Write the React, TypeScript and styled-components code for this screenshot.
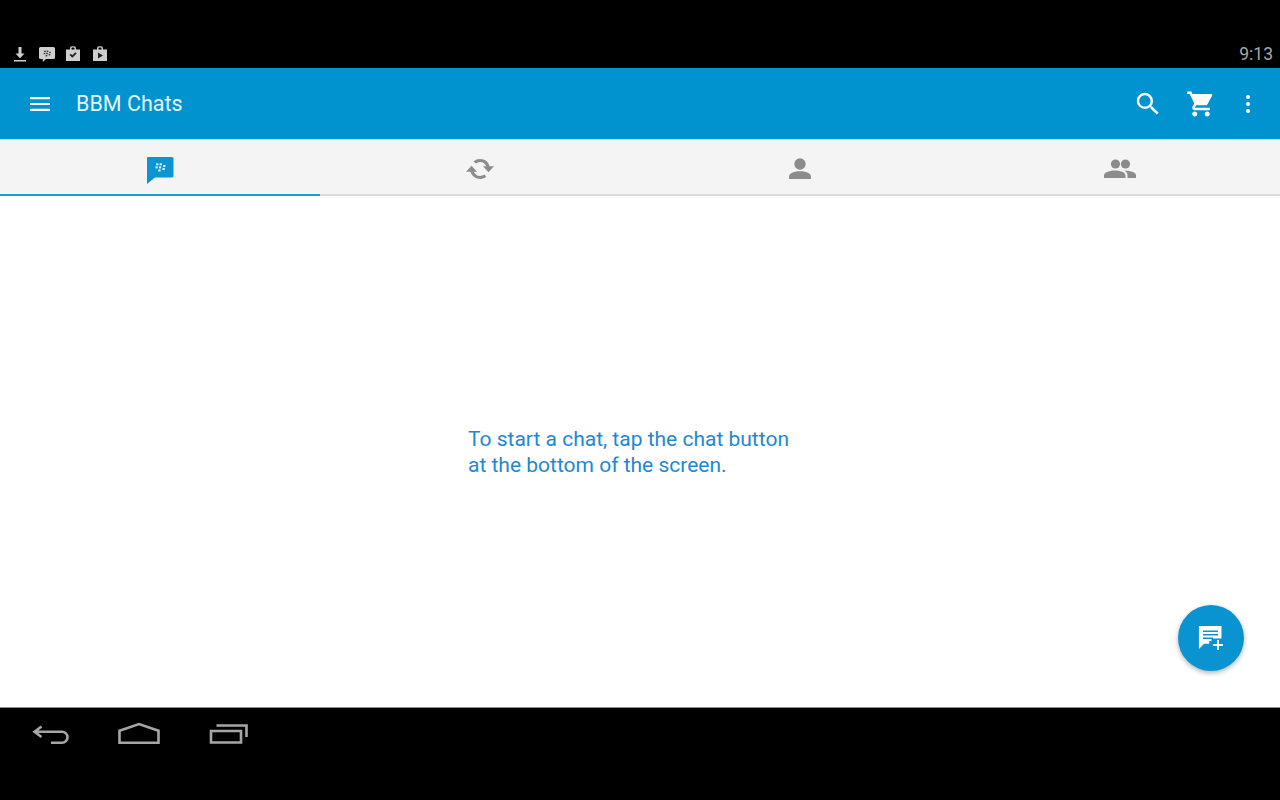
import React from "react";
import styled, { createGlobalStyle } from "styled-components";

const Global = createGlobalStyle`
  html, body { margin: 0; padding: 0; height: 100%; background: #000; }
  #root { height: 100%; }
`;

const Screen = styled.div`
  width: 1280px;
  height: 800px;
  display: flex;
  flex-direction: column;
  overflow: hidden;
  font-family: Roboto, "Liberation Sans", sans-serif;
  background: #000;
`;

const StatusBar = styled.div`
  height: 68px;
  flex: none;
  box-sizing: border-box;
  padding: 0 7px 3px 11px;
  display: flex;
  align-items: flex-end;
  justify-content: space-between;
  background: #000;
`;

const StatusIcons = styled.div`
  display: flex;
  align-items: center;
  gap: 0;
  height: 22px;
`;

const StatusIcon = styled.svg`
  width: 18px;
  height: 18px;
  margin-right: 8.5px;
  display: block;
  fill: #cfcfcf;
`;

const Clock = styled.span`
  font-size: 17.5px;
  line-height: 22px;
  color: #a8a8a8;
`;

const AppBar = styled.header`
  height: 71px;
  flex: none;
  box-sizing: border-box;
  display: flex;
  align-items: center;
  padding: 0 20px 0 28px;
  background: #0093d0;
  color: #fff;
`;

const Title = styled.h1`
  margin: 0 0 0 24px;
  flex: 1;
  font-size: 21.5px;
  font-weight: 400;
  line-height: 71px;
  color: #e4f4fb;
`;

const Actions = styled.div`
  display: flex;
  align-items: center;
  gap: 17px;
`;

const BarIcon = styled.svg`
  width: 24px;
  height: 24px;
  display: block;
  fill: #fff;
  flex: none;
`;

const MenuIcon = styled(BarIcon)``;

const Tabs = styled.nav`
  height: 57px;
  flex: none;
  display: grid;
  grid-template-columns: repeat(4, 1fr);
  background: #f4f4f4;
  box-shadow: inset 0 2px 1px -1px #d4d4d4;
  border-bottom: 2px solid #dcdcdc;
  box-sizing: border-box;
`;

const Tab = styled.div<{ $active?: boolean }>`
  position: relative;
  display: flex;
  align-items: center;
  justify-content: center;
  padding-top: 4px;
  box-sizing: border-box;
  height: 57px;
  border-bottom: 2px solid ${(p) => (p.$active ? "#1b9ad6" : "#dcdcdc")};
`;

const TabIcon = styled.svg<{ $active?: boolean }>`
  width: 32px;
  height: 32px;
  display: block;
  fill: ${(p) => (p.$active ? "#0b96d3" : "#8c8c8c")};
`;

const Content = styled.main`
  position: relative;
  flex: 1;
  background: #fff;
  display: flex;
  align-items: center;
  justify-content: center;
  border-bottom: 1px solid #8d8d8d;
`;

const Message = styled.p`
  width: 344px;
  margin: 0;
  font-size: 21px;
  line-height: 26px;
  color: #2288d0;
`;

const Fab = styled.button`
  position: absolute;
  right: 36px;
  bottom: 36px;
  width: 66px;
  height: 66px;
  padding: 0;
  border: 0;
  border-radius: 50%;
  background: #0a93d1;
  box-shadow: 0 2px 5px rgba(0, 0, 0, 0.3);
  display: flex;
  align-items: center;
  justify-content: center;
`;

const FabIcon = styled.svg`
  width: 28px;
  height: 28px;
  display: block;
`;

const NavBar = styled.footer`
  height: 92px;
  flex: none;
  box-sizing: border-box;
  padding: 12px 0 0 32px;
  display: flex;
  align-items: flex-start;
  gap: 30px;
  background: #000;
`;

const NavIcon = styled.svg`
  height: 32px;
  display: block;
  fill: none;
  stroke: #a6a6a6;
  stroke-width: 2.6;
`;

const Dots = () => (
  <>
    <rect x="6.2" y="5.6" width="1.6" height="1.4" />
    <rect x="8.7" y="5.6" width="1.6" height="1.4" />
    <rect x="5.7" y="7.8" width="1.6" height="1.4" />
    <rect x="8.2" y="7.8" width="1.6" height="1.4" />
    <rect x="11.2" y="6.8" width="1.6" height="1.4" />
    <rect x="10.7" y="9" width="1.6" height="1.4" />
    <rect x="7.7" y="10" width="1.6" height="1.4" />
  </>
);

export default function App() {
  return (
    <Screen>
      <Global />
      <StatusBar>
        <StatusIcons>
          <StatusIcon viewBox="0 0 18 18">
            <path d="M7.5 2h3v6.5h3L9 13.2 4.5 8.5h3zM3 15h12v1.6H3z" />
          </StatusIcon>
          <StatusIcon viewBox="0 0 18 18">
            <path fillRule="evenodd" d="M2.5 2h13A1.5 1.5 0 0 1 17 3.5v9a1.5 1.5 0 0 1-1.5 1.5H8l-3.2 3v-3H2.5A1.5 1.5 0 0 1 1 12.500v-9A1.500 1.500 0 0 1 2.500 2z" />
            <g fill="#333"><Dots /></g>
          </StatusIcon>
          <StatusIcon viewBox="0 0 18 18">
            <path fillRule="evenodd" d="M6 4.500V3.200A2 2 0 0 1 8 1.200h2a2 2 0 0 1 2 2v1.300h4V16H2V4.500zm1.500 0h3V3.200a.6.6 0 0 0-.6-.6H8.100a.6.6 0 0 0-.6.6z" />
            <path d="M5.500 10l1.300-1.200 1.500 1.500 3.100-3.100L12.700 8.400l-4.400 4.400z" fill="#222" />
          </StatusIcon>
          <StatusIcon viewBox="0 0 18 18">
            <path fillRule="evenodd" d="M6 4.500V3.200A2 2 0 0 1 8 1.200h2a2 2 0 0 1 2 2v1.300h4V16H2V4.500zm1.500 0h3V3.200a.6.6 0 0 0-.6-.6H8.100a.6.6 0 0 0-.6.6z" />
            <path d="M7 7.500l5 3-5 3z" fill="#222" />
          </StatusIcon>
        </StatusIcons>
        <Clock>9:13</Clock>
      </StatusBar>

      <AppBar>
        <MenuIcon viewBox="0 0 24 24">
          <path d="M2 5h20v2.200H2zM2 10.900h20v2.200H2zM2 16.800h20V19H2z" />
        </MenuIcon>
        <Title>BBM Chats</Title>
        <Actions>
          <BarIcon viewBox="0 0 24 24" style={{ width: 30, height: 30 }}>
            <path d="M15.500 14h-.79l-.28-.27A6.470 6.470 0 0 0 16 9.500 6.500 6.500 0 1 0 9.500 16c1.610 0 3.090-.59 4.230-1.570l.27.28v.79l5 4.990L20.490 19l-4.990-5zm-6 0C7.010 14 5 11.990 5 9.500S7.010 5 9.500 5 14 7.010 14 9.500 11.990 14 9.500 14z" />
          </BarIcon>
          <BarIcon viewBox="0 0 24 24" style={{ width: 30, height: 30, marginLeft: 6 }}>
            <path d="M7 18c-1.100 0-1.990.9-1.990 2S5.900 22 7 22s2-.9 2-2-.9-2-2-2zM1 2v2h2l3.600 7.590-1.350 2.450c-.16.28-.25.61-.25.96 0 1.100.9 2 2 2h12v-2H7.420c-.14 0-.25-.11-.25-.25l.03-.12.9-1.630h7.450c.75 0 1.410-.41 1.750-1.030l3.580-6.490A1 1 0 0 0 20 4H5.210l-.94-2H1zm16 16c-1.100 0-1.990.9-1.990 2s.89 2 1.990 2 2-.9 2-2-.9-2-2-2z" />
          </BarIcon>
          <BarIcon viewBox="0 0 24 24" style={{ marginLeft: 3 }}>
            <circle cx="12" cy="5" r="2.100" />
            <circle cx="12" cy="12" r="2.100" />
            <circle cx="12" cy="19" r="2.100" />
          </BarIcon>
        </Actions>
      </AppBar>

      <Tabs>
        <Tab $active>
          <TabIcon $active viewBox="0 0 32 32">
            <path fillRule="evenodd" d="M4 4h24a1.500 1.500 0 0 1 1.500 1.500V23a1.500 1.500 0 0 1-1.500 1.500H11L3 31V5a1 1 0 0 1 1-1z" />
            <g fill="#eef7fc" transform="translate(3.500 2.500) scale(1.400)"><Dots /></g>
          </TabIcon>
        </Tab>
        <Tab>
          <TabIcon viewBox="0 0 32 32">
            <path d="M16 6a10 10 0 0 1 9.600 7.200H30l-5.500 6-5.500-6h3.200A7 7 0 0 0 16 9a7 7 0 0 0-4.300 1.500L9.600 8.300A10 10 0 0 1 16 6zM7.500 12.800l5.500 6H9.800A7 7 0 0 0 16 23a7 7 0 0 0 4.300-1.500l2.100 2.200A10 10 0 0 1 6.400 18.800H2z" />
          </TabIcon>
        </Tab>
        <Tab>
          <TabIcon viewBox="0 0 32 32">
            <circle cx="16" cy="11" r="5.700" />
            <path d="M5 26v-2.400C5 20 11 18.200 16 18.200s11 1.800 11 5.400V26z" />
          </TabIcon>
        </Tab>
        <Tab>
          <TabIcon viewBox="0 0 32 32">
            <circle cx="11.500" cy="11" r="4.600" />
            <circle cx="21.500" cy="11" r="4.600" />
            <path d="M0 25v-2.700C0 19 6.500 17.500 11 17.500s10.500 1.500 10.500 4.800V25zM20.500 17.600c4.600.2 11.500 1.500 11.500 4.700V25h-8.500v-3c0-1.700-1.300-3.300-3-4.400z" />
          </TabIcon>
        </Tab>
      </Tabs>

      <Content>
        <Message>
          To start a chat, tap the chat button
          <br />
          at the bottom of the screen.
        </Message>
        <Fab aria-label="New chat">
          <FabIcon viewBox="0 0 28 28">
            <path d="M1 2h24v16H12v3H6.500L1 26.500z" fill="#fff" transform="translate(1 0) scale(.94)" />
            <path d="M6 6.500h15v1.600H6zM6 10h15v1.600H6zM6 13.500h10v1.600H6z" fill="#0a93d1" />
            <path d="M14.500 14.500h13v13h-13z" fill="#0a93d1" />
            <path d="M20 16h2v4h4v2h-4v4h-2v-4h-4v-2h4z" fill="#fff" />
          </FabIcon>
        </Fab>
      </Content>

      <NavBar>
        <NavIcon viewBox="0 0 38 32" style={{ width: 38 }}>
          <path d="M9.500 6.500L2.500 11.800 9.500 17M3 11.800h27a5.500 5.500 0 0 1 0 11H19" />
        </NavIcon>
        <NavIcon viewBox="0 0 42 32" style={{ width: 42, marginLeft: 18 }}>
          <path d="M1.500 10.700L21 4l19.500 6.700V22.700h-39z" />
        </NavIcon>
        <NavIcon viewBox="0 0 40 32" style={{ width: 40, marginLeft: 19 }}>
          <path d="M2 11h30v11.500H2zM7.500 5.500H37.500V17" />
        </NavIcon>
      </NavBar>
    </Screen>
  );
}
